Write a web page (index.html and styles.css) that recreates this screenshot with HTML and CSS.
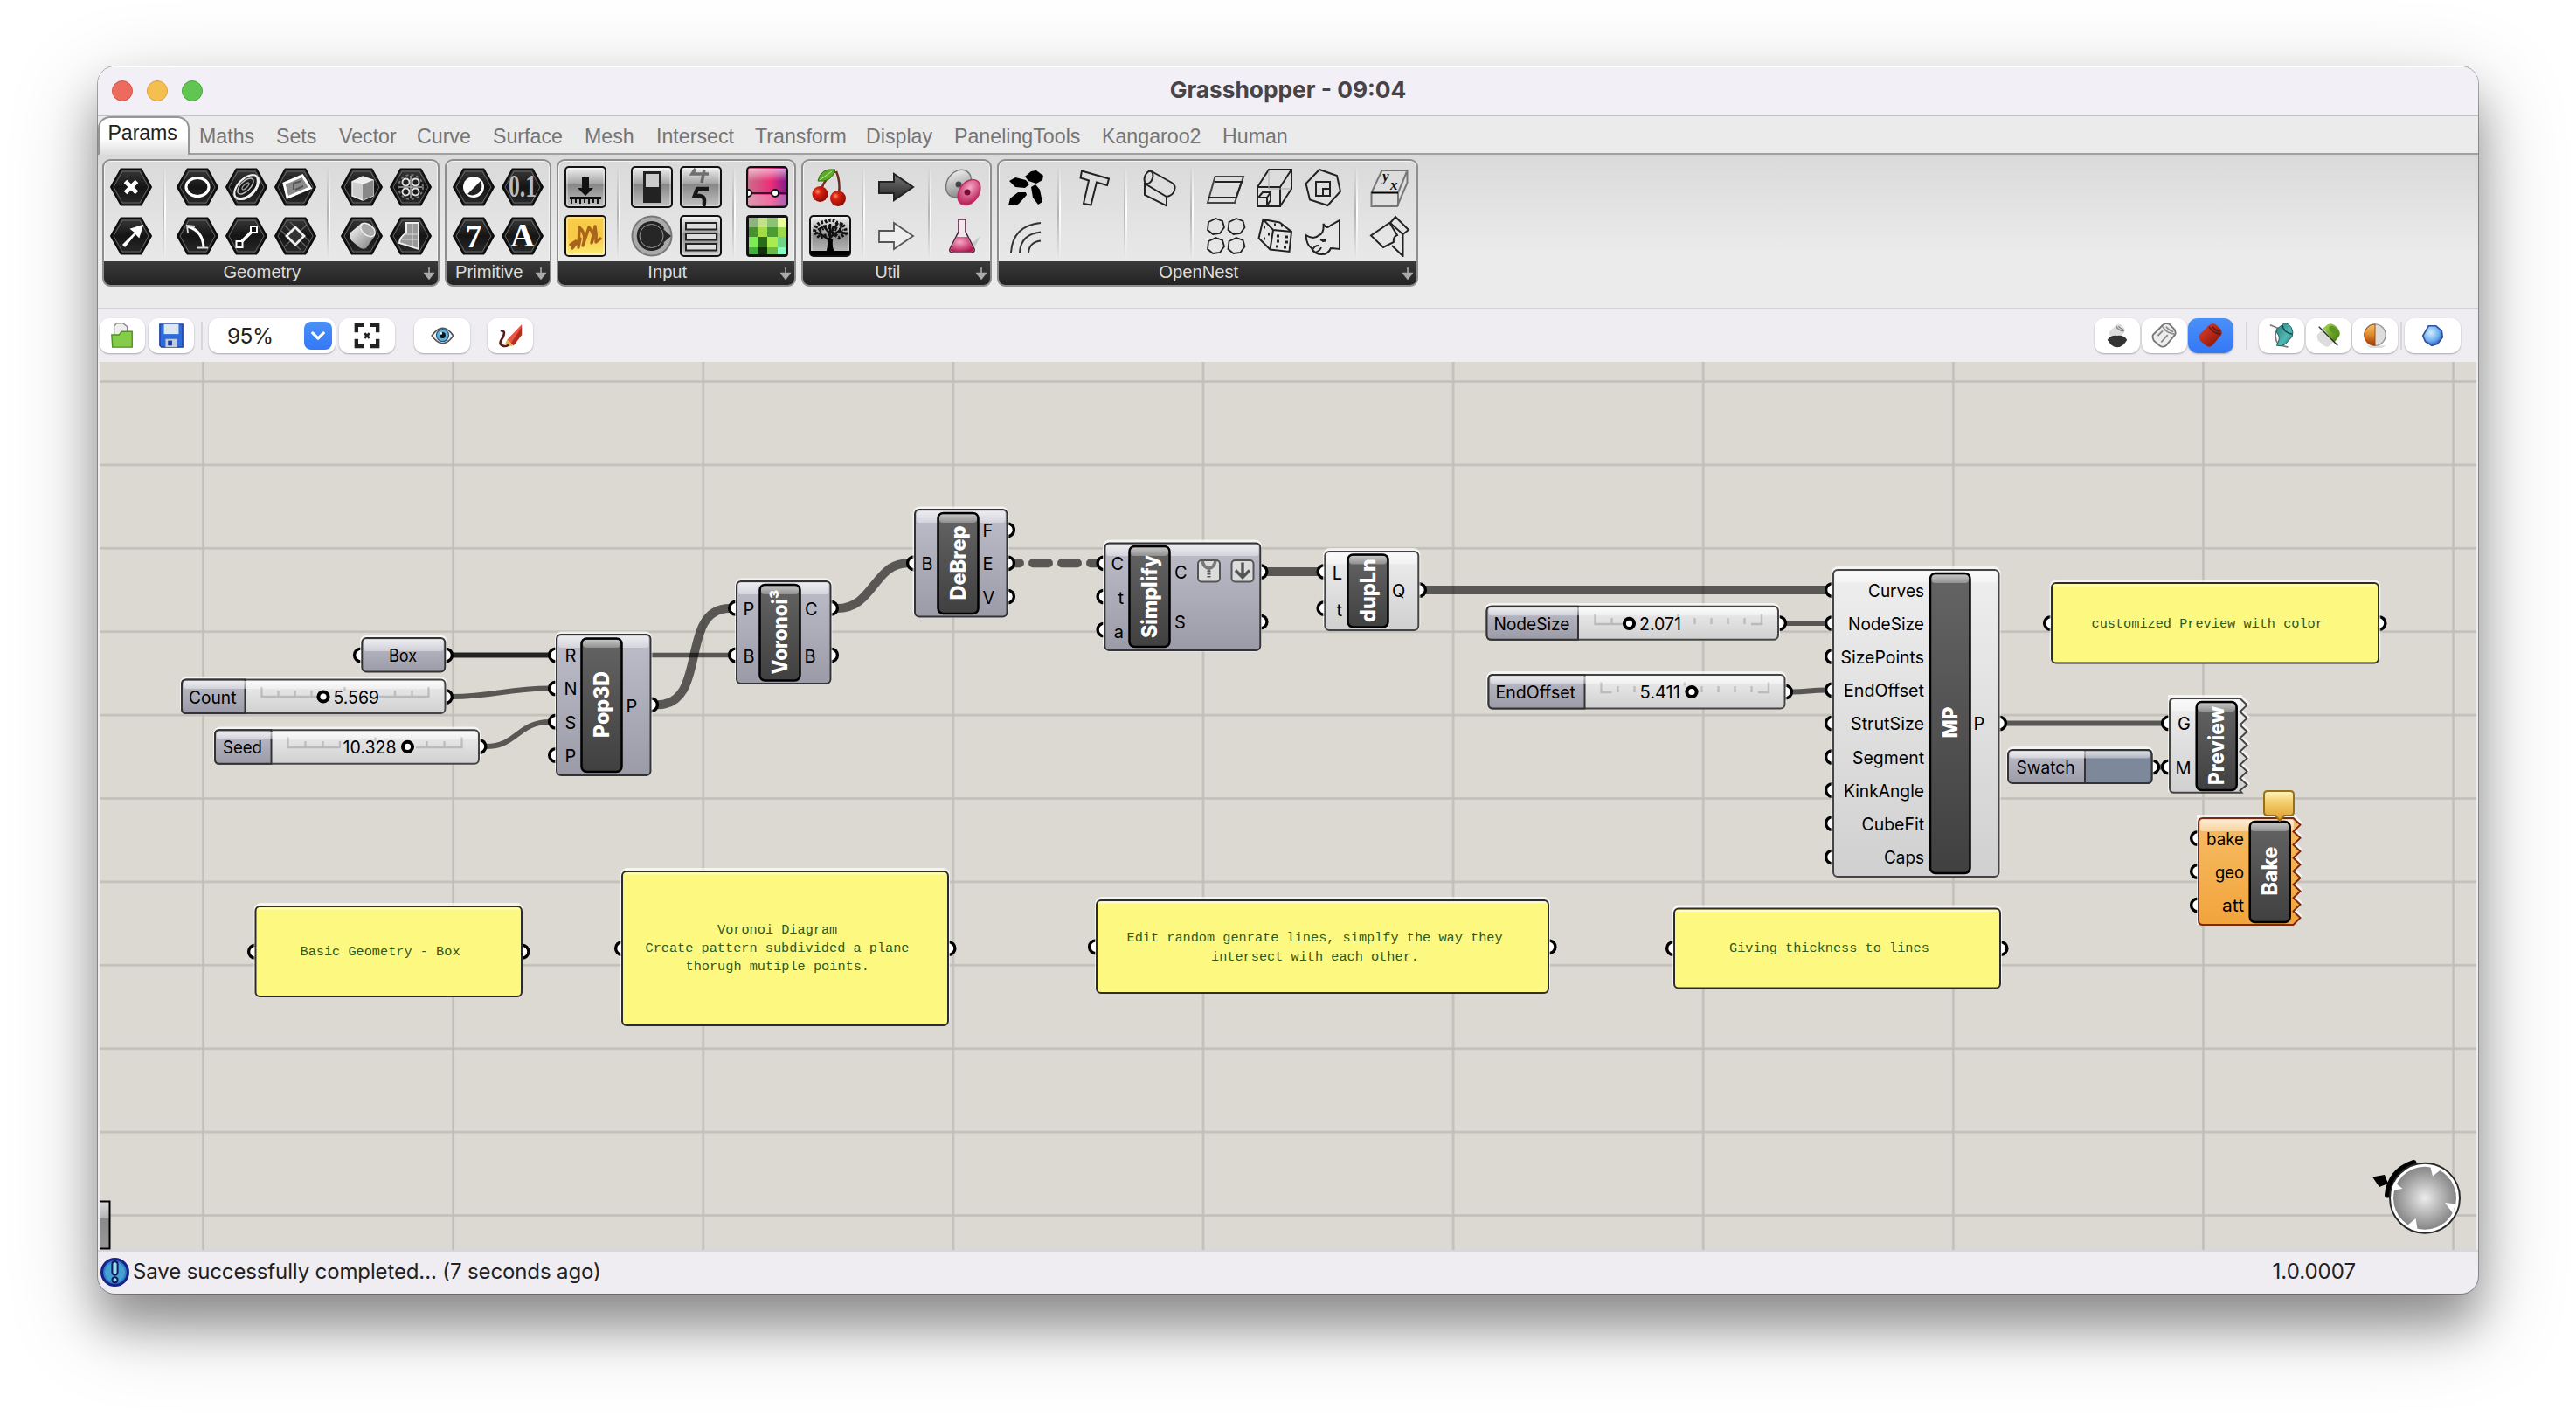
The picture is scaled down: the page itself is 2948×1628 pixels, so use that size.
FILE: index.html
```html
<!DOCTYPE html>
<html lang="en">
<head>
<meta charset="utf-8">
<title>Grasshopper - 09:04</title>
<link rel="stylesheet" href="styles.css">
</head>
<body>
<svg class="defs" width="0" height="0" aria-hidden="true">
  <defs>
    <linearGradient id="hexg" x1="0" y1="0" x2="0" y2="1"><stop offset="0" stop-color="#3a3a3a"/><stop offset=".5" stop-color="#141414"/><stop offset="1" stop-color="#2a2a2a"/></linearGradient>
    <linearGradient id="silver" x1="0" y1="0" x2="0" y2="1"><stop offset="0" stop-color="#f2f2f2"/><stop offset=".42" stop-color="#a4a4a4"/><stop offset=".43" stop-color="#858585"/><stop offset="1" stop-color="#c4c4c4"/></linearGradient>
    <linearGradient id="amber" x1="0" y1="0" x2="0" y2="1"><stop offset="0" stop-color="#f6cd4c"/><stop offset=".5" stop-color="#f8c944"/><stop offset="1" stop-color="#fdec74"/></linearGradient>
    <linearGradient id="pink" x1="0" y1="0" x2="1" y2="0"><stop offset="0" stop-color="#c8708c"/><stop offset=".6" stop-color="#ee2c78"/><stop offset="1" stop-color="#7c1c90"/></linearGradient>
    <linearGradient id="fade" x1="0" y1="0" x2="0" y2="1"><stop offset="0" stop-color="#fff" stop-opacity=".6"/><stop offset="1" stop-color="#fff" stop-opacity="0"/></linearGradient>
    <linearGradient id="steel" x1="0" y1="0" x2="1" y2="1"><stop offset="0" stop-color="#fff"/><stop offset="1" stop-color="#777"/></linearGradient>
    <linearGradient id="darkarrow" x1="0" y1="0" x2="0" y2="1"><stop offset="0" stop-color="#777"/><stop offset="1" stop-color="#222"/></linearGradient>
    <radialGradient id="cherry" cx=".35" cy=".35" r=".7"><stop offset="0" stop-color="#ff8a70"/><stop offset=".3" stop-color="#d8220f"/><stop offset="1" stop-color="#8c0b05"/></radialGradient>
    <radialGradient id="magenta" cx=".4" cy=".35" r=".7"><stop offset="0" stop-color="#f7a8c6"/><stop offset="1" stop-color="#b3174f"/></radialGradient>
    <linearGradient id="redcyl" x1="0" y1="0" x2="1" y2="1"><stop offset="0" stop-color="#e8442e"/><stop offset="1" stop-color="#7e0e06"/></linearGradient>
    <linearGradient id="tealcyl" x1="0" y1="0" x2="1" y2="1"><stop offset="0" stop-color="#2a8080"/><stop offset=".6" stop-color="#54b8b4"/><stop offset="1" stop-color="#1e6464"/></linearGradient>
    <linearGradient id="greencyl" x1="0" y1="0" x2="1" y2="1"><stop offset="0" stop-color="#a6dc52"/><stop offset="1" stop-color="#3c7408"/></linearGradient>
    <radialGradient id="bluegem" cx=".4" cy=".35" r=".7"><stop offset="0" stop-color="#d4ecff"/><stop offset=".6" stop-color="#6cb0f0"/><stop offset="1" stop-color="#2c50b0"/></radialGradient>
    <linearGradient id="orangeball" x1="0" y1="0" x2="0" y2="1"><stop offset="0" stop-color="#f4c26a"/><stop offset=".5" stop-color="#e08a28"/><stop offset="1" stop-color="#a03404"/></linearGradient>
    <symbol id="hex" viewBox="0 0 48 48"><path d="M1 24 12.5 3.500h23L47 24 35.500 44.500h-23z" fill="url(#hexg)" stroke="#0c0c0c" stroke-width="2"/><path d="M4 24 14 6h20l10 18-10 18H14z" fill="none" stroke="#666" stroke-width="1"/></symbol>
    <symbol id="plate" viewBox="0 0 48 48"><rect x="1" y="1" width="46" height="46" rx="4" fill="url(#silver)" stroke="#111" stroke-width="2"/><rect x="3" y="3" width="42" height="42" rx="2" fill="none" stroke="#fff" stroke-opacity=".6"/></symbol>
    <symbol id="more" viewBox="0 0 14 16"><path d="M7 1v13M1 7.500h12M3 9l4 5 4-5z" stroke="#aaa" stroke-width="1.600" fill="#aaa"/></symbol>
    <symbol id="tube" viewBox="0 0 32 32"><path d="M2 15 14 3Q18 0 22 2L28 8Q31 13 28 16L18 28Q14 31 10 28L3 22Q1 18 2 15z"/><path d="M14 5Q18 13 28 14M18 5q4 5 9 6" fill="none" stroke="#0006" stroke-width="2"/></symbol>
  </defs>
</svg>

<main class="window">
  <header class="titlebar">
    <div class="lights"><i class="red"></i><i class="yellow"></i><i class="green"></i></div>
    <h1>Grasshopper - 09:04</h1>
  </header>

  <nav class="tabs">
    <a class="active">Params</a><a>Maths</a><a>Sets</a><a>Vector</a><a>Curve</a><a>Surface</a><a>Mesh</a><a>Intersect</a><a>Transform</a><a>Display</a><a>PanelingTools</a><a>Kangaroo2</a><a>Human</a>
  </nav>

  <section class="ribbon">
    <div class="group">
      <div class="tools">
        <div class="bank">
          <svg class="icon" viewBox="0 0 48 48"><use href="#hex"/><path d="M17.500 17.500l13 13m0-13l-13 13" stroke="#fff" stroke-width="5"/></svg>
          <svg class="icon" viewBox="0 0 48 48"><use href="#hex"/><path d="M15 34 29 20l-5-4 13-4-4 13-4-4L17 36z" fill="#fff" stroke="#fff" stroke-width="1.500"/></svg>
        </div>
        <span class="sep"></span>
        <div class="bank">
          <svg class="icon" viewBox="0 0 48 48"><use href="#hex"/><ellipse cx="24" cy="24" rx="13" ry="10.500" fill="none" stroke="#fff" stroke-width="3.200"/></svg>
          <svg class="icon" viewBox="0 0 48 48"><use href="#hex"/><path d="M13 13Q30 18 31 37" fill="none" stroke="#fff" stroke-width="3"/><path d="M13 20l-1-8 9 1M23 37.500h13" fill="none" stroke="#ddd" stroke-width="1.800"/></svg>
          <svg class="icon" viewBox="0 0 48 48"><use href="#hex"/><g transform="rotate(-45 24 24)" fill="none" stroke="#eee"><ellipse cx="24" cy="24" rx="17" ry="9.500" stroke-width="2.200"/><path d="M7 25Q12 34 24 34t17-9" stroke-width="3"/><ellipse cx="24" cy="22.500" rx="11.500" ry="5.500" stroke-width="1.500" stroke="#bbb"/><ellipse cx="24" cy="22.500" rx="5" ry="2" stroke-width="1.500" stroke="#999"/></g></svg>
          <svg class="icon" viewBox="0 0 48 48"><use href="#hex"/><path d="M16 33 32 17" stroke="#fff" stroke-width="3.600"/><rect x="12.500" y="30" width="7" height="7" fill="#111" stroke="#fff" stroke-width="2"/><rect x="29" y="13" width="7" height="7" fill="#111" stroke="#fff" stroke-width="2"/></svg>
          <svg class="icon" viewBox="0 0 48 48"><use href="#hex"/><path d="M11 20 32 11 41 25 15 36z" fill="#8a8a8a" stroke="#fff" stroke-width="3"/><path d="M22 27V20l9-3M24 27l9-4" fill="none" stroke="#555" stroke-width="2"/></svg>
          <svg class="icon" viewBox="0 0 48 48"><use href="#hex"/><path d="M12 12 37 37M12 36 37 11M18 8l22 22M8 18l22 22" stroke="#666" stroke-width="1.200"/><path d="M24 14 34 24 24 34 14 24z" fill="#333" stroke="#eee" stroke-width="2.800"/></svg>
        </div>
        <span class="sep"></span>
        <div class="bank">
          <svg class="icon" viewBox="0 0 48 48"><use href="#hex"/><path d="M13 18 25 12 37 16V34L25 39 13 34z" fill="#ccc" stroke="#eee" stroke-width="1.500"/><path d="M25 21 37 16V34L25 39z" fill="#888"/><path d="M13 18 25 12 37 16 25 21z" fill="#eee"/></svg>
          <svg class="icon" viewBox="0 0 48 48"><use href="#hex"/><path d="M11 20 24 9Q32 9 37 15q3 4 2 9L29 38q-4 2-8-1l-9-8q-3-5-1-9z" fill="url(#steel)"/><ellipse cx="31" cy="17" rx="9.500" ry="6" transform="rotate(40 31 17)" fill="#aaa" stroke="#eee" stroke-width="1.500"/></svg>
          <svg class="icon" viewBox="0 0 48 48"><use href="#hex"/><g fill="none" stroke="#ddd" stroke-width="2"><circle cx="18.500" cy="18.500" r="4"/><circle cx="29.500" cy="18.500" r="4"/><circle cx="18.500" cy="29.500" r="4"/><circle cx="29.500" cy="29.500" r="4"/><path d="M24 11v26M11 24h26" stroke="#aaa" stroke-width="1.500"/><circle cx="24" cy="24" r="14" stroke="#777" stroke-width="2" stroke-dasharray="3 3"/></g></svg>
          <svg class="icon" viewBox="0 0 48 48"><use href="#hex"/><path d="M19 9h14v30L11 32q0-6 8-12z" fill="#999" stroke="#eee" stroke-width="2"/><path d="M26 10v27M17 22h16M14 28h19" stroke="#ddd" stroke-width="1"/></svg>
        </div>
      </div>
      <footer><span>Geometry</span><svg class="more"><use href="#more"/></svg></footer>
    </div>

    <div class="group">
      <div class="tools">
        <div class="bank">
          <svg class="icon" viewBox="0 0 48 48"><use href="#hex"/><circle cx="24" cy="24" r="12" fill="#fff"/><path d="M32 17a11 11 0 0 1-15 15z" fill="#222"/></svg>
          <svg class="icon" viewBox="0 0 48 48"><use href="#hex"/><text x="24" y="37" class="glyph" font-size="38">7</text></svg>
          <svg class="icon" viewBox="0 0 48 48"><use href="#hex"/><text x="24" y="35" class="glyph dim" font-size="35" textLength="32" lengthAdjust="spacingAndGlyphs">0.1</text></svg>
          <svg class="icon" viewBox="0 0 48 48"><use href="#hex"/><text x="24" y="36" class="glyph" font-size="38">A</text></svg>
        </div>
      </div>
      <footer><span>Primitive</span><svg class="more"><use href="#more"/></svg></footer>
    </div>

    <div class="group">
      <div class="tools">
        <div class="bank">
          <svg class="icon" viewBox="0 0 48 48"><use href="#plate"/><path d="M20 13h8v12h5l-9 9-9-9h5zM6 35h36v3H6z" fill="#111"/><path d="M8 38v5m5-5v4m5-4v5m5-5v4m5-4v5m5-5v4m5-4v5" stroke="#111" stroke-width="2"/></svg>
          <svg class="icon" viewBox="0 0 48 48"><rect x="1" y="1" width="46" height="46" rx="4" fill="url(#amber)" stroke="#111" stroke-width="2"/><rect x="3" y="3" width="42" height="42" fill="none" stroke="#fff" stroke-opacity=".7"/><path d="M7 34l6-4-4 8 9-11-2 10L17 14q9 8 4 21l7-21q8 8 3 18l4-19q2 9 1 18l5-4" fill="none" stroke="#a8641c" stroke-width="3.400" stroke-linejoin="round" stroke-linecap="round"/></svg>
        </div>
        <span class="sep"></span>
        <div class="bank">
          <svg class="icon" viewBox="0 0 48 48"><use href="#plate"/><rect x="14" y="6" width="21" height="36" fill="#222"/><rect x="17" y="9" width="15" height="15" fill="#ccc"/></svg>
          <svg class="icon" viewBox="0 0 48 48"><circle cx="24" cy="24" r="22.500" fill="#aaa" stroke="#777" stroke-width="2"/><path d="M46 24 37 32A15.500 15.500 0 1 1 37 16z" fill="#262626"/><path d="M37 32A15.500 15.500 0 1 1 37 16" fill="none" stroke="#222" stroke-width="3"/><circle cx="23.500" cy="24" r="13.500" fill="none" stroke="#999" stroke-width="1"/></svg>
          <svg class="icon" viewBox="0 0 48 48"><use href="#plate"/><path d="M18 3 14 9h19M28 4l-3 15" fill="none" stroke="#444" stroke-opacity=".7" stroke-width="3.600"/><path d="M33 26H20l-3 8q11-1 11 5t-1 7" fill="none" stroke="#161616" stroke-width="4.500"/></svg>
          <svg class="icon" viewBox="0 0 48 48"><use href="#plate"/><g fill="#ddd" stroke="#222" stroke-width="2"><rect x="7" y="9" width="35" height="7.500"/><rect x="7" y="21" width="35" height="7.500"/><rect x="7" y="33" width="35" height="7.500"/></g></svg>
        </div>
        <span class="sep"></span>
        <div class="bank">
          <svg class="icon" viewBox="0 0 48 48"><rect x="1" y="1" width="46" height="46" rx="4" fill="url(#pink)" stroke="#111" stroke-width="2"/><path d="M3 3h42v14H3z" fill="url(#fade)"/><path d="M2 33h44v12H2z" fill="#fff" opacity=".3"/><path d="M2 31h44" stroke="#401030" stroke-width="2"/><circle cx="33" cy="31" r="4" fill="#fff" stroke="#111" stroke-width="2"/><path d="M2 27a4 4 0 0 1 0 8" fill="#fff" stroke="#111" stroke-width="2"/></svg>
          <svg class="icon" viewBox="0 0 48 48"><rect width="48" height="48" rx="4" fill="#111"/><path d="M3 3h10v11H3z" fill="#8cb47c"/><path d="M13 3h11v11H13z" fill="#c4e088"/><path d="M24 3h12v11H24z" fill="#8cc474"/><path d="M36 3h9v11h-9z" fill="#e8fca0"/><path d="M3 14h10v11H3z" fill="#48902c"/><path d="M13 14h11v11H13z" fill="#a4dc44"/><path d="M24 14h12v11H24z" fill="#4c9c34"/><path d="M36 14h9v11h-9z" fill="#9cd84c"/><path d="M3 25h10v12H3z" fill="#7cec54"/><path d="M13 25h11v12H13z" fill="#2a6c1c"/><path d="M24 25h12v12H24z" fill="#a8ec50"/><path d="M36 25h9v12h-9z" fill="#6cd484"/><path d="M3 37h10v8H3z" fill="#44ac3c"/><path d="M13 37h11v8H13z" fill="#14300c"/><path d="M24 37h12v8H24z" fill="#6cb848"/><path d="M36 37h9v8h-9z" fill="#84fcc4"/></svg>
        </div>
      </div>
      <footer><span>Input</span><svg class="more"><use href="#more"/></svg></footer>
    </div>

    <div class="group">
      <div class="tools">
        <div class="bank">
          <svg class="icon" viewBox="0 0 48 48"><path d="M30 6Q18 14 14 26M31 6q5 12 3 26" fill="none" stroke="#6e2a1c" stroke-width="2.500"/><path d="M10 17Q13 2 30 4 26 19 10 17z" fill="#5cab28" stroke="#2f6a10"/><path d="M12 16 26 6" stroke="#c4e890" stroke-width="1"/><circle cx="12.500" cy="32" r="9" fill="url(#cherry)"/><circle cx="33" cy="37" r="9" fill="url(#cherry)"/></svg>
          <svg class="icon" viewBox="0 0 48 48"><use href="#plate"/><path d="M2 41h44v5H2z" fill="#000"/><path d="M21 42q2-8 1-14l-10-7m10 7 5-5 9-6M24 27V10m0 12-8-10m9 8 8-11M14 22l-7-2m6 2 0-8m21 5 7 2m-6-3 3-9" fill="none" stroke="#111" stroke-width="2.500"/><path d="M21 28h6q-1 9 2 14h-9q2-8 1-14z" fill="#000"/><path d="M6 19Q8 8 18 8q8-5 14 1 10 1 10 12l-8 5-6-5-8 2-8 3z" fill="none" stroke="#111" stroke-width="4" stroke-dasharray="2.500 2"/><path d="M11 18Q18 12 25 14t13 5" fill="none" stroke="#111" stroke-width="5" stroke-dasharray="2 2"/></svg>
        </div>
        <span class="sep"></span>
        <div class="bank">
          <svg class="icon" viewBox="0 0 48 48"><path d="M4 18h17V9l22 15-22 15v-8H4z" fill="url(#darkarrow)" stroke="#222" stroke-width="2"/></svg>
          <svg class="icon" viewBox="0 0 48 48"><path d="M4 18h17V9l22 15-22 15v-8H4z" fill="#eee" stroke="#555" stroke-width="1.800"/></svg>
        </div>
        <span class="sep"></span>
        <div class="bank">
          <svg class="icon" viewBox="0 0 48 48"><ellipse cx="19" cy="20" rx="13" ry="17" transform="rotate(35 19 20)" fill="url(#steel)" stroke="#777" stroke-width="1.500"/><circle cx="19" cy="21" r="3.500" fill="#444"/><ellipse cx="31" cy="30" rx="11" ry="16" transform="rotate(35 31 30)" fill="url(#magenta)" stroke="#c22c64" stroke-width="1.500"/><circle cx="29" cy="30" r="3.500" fill="#7a0c34"/></svg>
          <svg class="icon" viewBox="0 0 48 48"><path d="M30 36 44 24l-7 14z" fill="#0002"/><path d="M19 5h8v14l10 20q1 4-4 4H13q-5 0-4-4l10-20z" fill="#f2e8ee" stroke="#5a2040" stroke-width="1.600"/><path d="M17 25h12l7 14q1 3-3 3H13q-4 0-3-3z" fill="url(#magenta)"/></svg>
        </div>
      </div>
      <footer><span>Util</span><svg class="more"><use href="#more"/></svg></footer>
    </div>

    <div class="group">
      <div class="tools line">
        <div class="bank">
          <svg class="icon" viewBox="0 0 48 48"><g fill="#000" stroke="none"><path d="M5 17l7-4 12 3 4 5-5 4-11-1z"/><path d="M23 12l7-6 6-1 8 6-1 5-7 4-9-3z"/><path d="M4 45l2-8 9-7h9l1 3-9 10-3 2z"/><path d="M30 24l5-3 5 6 3 14-5 3-6-8z"/></g></svg>
          <svg class="icon" viewBox="0 0 48 48"><path d="M7 43Q9 12 41 9M17 43Q18 22 41 19.500M27 43Q28 31 41 29.500" stroke="#333"/></svg>
        </div>
        <span class="sep"></span>
        <div class="bank"><svg class="icon" viewBox="0 0 48 48"><path d="M12 5.500 43 14.500 41 22 29 18.500 22.500 44.500 14 43 20 16.500 10.500 13.500z"/></svg></div>
        <span class="sep"></span>
        <div class="bank"><svg class="icon" viewBox="0 0 48 48"><ellipse cx="12.500" cy="13" rx="4.500" ry="7.500" transform="rotate(20 12.500 13)"/><path d="M15 5.500 39 19Q44 22 42 28 40 34 33 35L8 20v13l25 12.500V35"/></svg></div>
        <span class="sep"></span>
        <div class="bank">
          <svg class="icon" viewBox="0 0 48 48"><path d="M12.500 12H45L35 42H4l8.500-30" stroke="#444"/><path d="M4 36h32.500L43 18H12" stroke="#222"/></svg>
          <svg class="icon" viewBox="0 0 48 48"><path d="M13.500 4l7.500 3 2 7-5 7-8 1-6-5 1-9zM37 4l7.500 3 2 7-5 7-8 1-6-5 1-9zM13.500 26l7.500 3 2 7-5 7-8 1-6-5 1-9zM37 26l7.500 3 2 7-5 7-8 1-6-5 1-9z" stroke-width="1.800"/></svg>
          <svg class="icon" viewBox="0 0 48 48"><path d="M5 24h26v22H5zM5 24 18 4h26v22L31 46M31 24 44 4"/><path d="M18 4v22M18 26h26" stroke="#aaa" stroke-width="1"/><path d="M6 36h10v9M6 36l5-6h9v9l-4 6M16 36l4-6"/></svg>
          <svg class="icon" viewBox="0 0 48 48"><path d="M11.500 5 30.500 8.500 44 19 41.500 42 19.500 39.500 6.500 26.500zM11.500 5 23 17l21 2M23 17l-3.500 22.500"/><path d="M27 24h3m7 1h3m-13 5h3m7 1h3m-14 5h3m6 1h3M12 14h2m-2 13h2m3-5h2M24 11h2m6 1h2" stroke-width="3"/></svg>
          <svg class="icon" viewBox="0 0 48 48"><path d="M20 4 40 11 44 29 29.500 45 9 38.500 4.500 20z"/><path d="M16 18h16v16H16zM32 26h-8v8"/></svg>
          <svg class="icon" viewBox="0 0 48 48"><path d="M4.500 23q9 6 15 0 6-2 5-13 4 7 8 2L43 6v33l-10-1q-3 7-10 7-9 0-12-7-6-4-6.500-15zM12 40q2-5 7-5m-5 8q6-1 8-6M21 28l4 2"/><path d="M23 29h4" stroke-width="3.500"/></svg>
        </div>
        <span class="sep"></span>
        <div class="bank">
          <svg class="icon" viewBox="0 0 48 48"><path d="M15.500 5h29v14L33 46H3.500V30.500zM44.500 5 34 30.500V46" stroke="#777"/><path d="M3.500 30.500H34" stroke="#000"/><text x="16" y="17" class="axis">y</text><text x="25" y="27" class="axis">x</text></svg>
          <svg class="icon" viewBox="0 0 48 48"><path d="M24 9 3 23.500 17 37l12-6q-1-6 4-8l-8-13zM31 2 46 17l-6.500 5L25 9zM39.500 22v25L27 35"/></svg>
        </div>
      </div>
      <footer><span>OpenNest</span><svg class="more"><use href="#more"/></svg></footer>
    </div>
  </section>

  <section class="toolbar">
    <div class="left">
      <button class="btn w52"><svg class="tb" viewBox="0 0 32 32"><path d="M6 16V4l3-3h8l5 4v9z" fill="#eee" stroke="#888" stroke-width="1.400"/><path d="M3 15h9l3-4h13v19H4z" fill="#86cc48" stroke="#4c9424" stroke-width="1.500"/></svg></button>
      <button class="btn w52 save"><svg class="tb" viewBox="0 0 32 32"><path d="M2 2h28v28H4l-2-2z" fill="#2e6cdc" stroke="#1c3c98" stroke-width="1.500"/><path d="M7 2h18v12H7z" fill="#dde8f0"/><path d="M9 20h14v10H9z" fill="#c4ccd8"/><path d="M12 22h5v6h-5z" fill="#1c3c98"/></svg></button>
      <span class="rule"></span>
      <div class="zoom"><span>95%</span><i><svg viewBox="0 0 16 16"><path d="M3 5.500l5 5 5-5" fill="none" stroke="#fff" stroke-width="2.600" stroke-linecap="round" stroke-linejoin="round"/></svg></i></div>
      <button class="btn w64 fit"><svg class="tb" viewBox="0 0 32 32"><path d="M3 12V3h9M20 3h9v9M29 20v9h-9M12 29H3v-9" fill="none" stroke="#222" stroke-width="4.600"/><path d="M13 13l6 6m0-6l-6 6" stroke="#222" stroke-width="3"/></svg></button>
      <button class="btn w64 eye"><svg class="tb" viewBox="0 0 32 32"><path d="M2 16Q9 6 16 6t14 10Q23 26 16 26T2 16z" fill="#f4f4f4" stroke="#555" stroke-width="2"/><circle cx="16" cy="15.500" r="8" fill="#5cb4dc" stroke="#2c5c80" stroke-width="1.500"/><circle cx="16" cy="15.500" r="4" fill="#0c1420"/><circle cx="14" cy="13" r="1.500" fill="#fff"/></svg></button>
      <button class="btn w52 paint"><svg class="tb" viewBox="0 0 32 32"><path d="M30 2v13L20 28 12 21z" fill="#ec5444"/><path d="M30 5v10L20 28l-3-3z" fill="#b82c20"/><path d="M12 21l8 7-6 1-4-4z" fill="#e8b048"/><path d="M4 10q7-1 3 8-6 8-1 10 5 2 8-1" fill="none" stroke="#5a1c14" stroke-width="2.800"/></svg></button>
    </div>
    <div class="right">
      <button class="btn w52"><svg class="tb" viewBox="0 0 32 32"><use href="#tube" x="5" y="0" width="22" height="24" fill="#ddd"/><path d="M4 21q4-6 12-5 8-1 12 5-5 9-12 9T4 21z" fill="#333"/></svg></button>
      <button class="btn w52"><svg class="tb" viewBox="0 0 32 32"><use href="#tube" fill="#eee" stroke="#777" stroke-width="2"/><path d="M8 16l6-6M12 24l8-9" stroke="#888" stroke-width="2"/></svg></button>
      <button class="btn w52 on"><svg class="tb" viewBox="0 0 32 32"><use href="#tube" fill="url(#redcyl)"/></svg></button>
      <span class="rule"></span>
      <button class="btn w52"><svg class="tb" viewBox="0 0 32 32"><path d="M2 3l10 4q-7 8 0 20l12 3" fill="none" stroke="#777" stroke-width="1.800"/><path d="M10 8 19 1q5-1 9 5 3 6 1 11l-8 9q-5 4-11 2 5-9 2-13-3-3-2-7z" fill="url(#tealcyl)" stroke="#1c6060"/><path d="M17 3q1 9 12 11" fill="none" stroke="#104c4c" stroke-width="1.500"/></svg></button>
      <button class="btn w52"><svg class="tb" viewBox="0 0 32 32"><use href="#tube" fill="#ddd"/><path d="M9 7 15 2q6-2 12 5 5 7 0 12l-4 5z" fill="url(#greencyl)"/><path d="M4 5 27 28" stroke="#243424" stroke-width="1.600"/><ellipse cx="21.500" cy="9" rx="6" ry="3.500" transform="rotate(40 21.500 9)" fill="#5c9820"/></svg></button>
      <button class="btn w52"><svg class="tb" viewBox="0 0 32 32"><path d="M6 28h24l-6 3H10z" fill="#0002"/><circle cx="16" cy="15" r="13" fill="#ddd" stroke="#999" stroke-width="1.500"/><path d="M16 2a13 13 0 0 0 0 26z" fill="url(#orangeball)" stroke="#a04808"/></svg></button>
      <span class="rule tight"></span>
      <button class="btn w64"><svg class="tb" viewBox="0 0 32 32"><path d="M11 4h9l7 6 1 8-6 8-7 2-8-5-3-7z" fill="url(#bluegem)" stroke="#3450a0" stroke-width="1.800"/></svg></button>
    </div>
  </section>

  <section class="canvas">
    <svg class="graph" viewBox="114 414 2720 1016">
      <defs>
        <linearGradient id="nb" x1="0" y1="0" x2="0" y2="1"><stop offset="0" stop-color="#bebecb"/><stop offset="1" stop-color="#9b9ba8"/></linearGradient>
        <linearGradient id="wb" x1="0" y1="0" x2="0" y2="1"><stop offset="0" stop-color="#eee"/><stop offset="1" stop-color="#d0d0d0"/></linearGradient>
        <linearGradient id="db" x1="0" y1="0" x2="0" y2="1"><stop offset="0" stop-color="#646464"/><stop offset="1" stop-color="#404040"/></linearGradient>
        <linearGradient id="ob" x1="0" y1="0" x2="0" y2="1"><stop offset="0" stop-color="#f6bc64"/><stop offset="1" stop-color="#f2a43c"/></linearGradient>
        <linearGradient id="gl" x1="0" y1="0" x2="0" y2="1"><stop offset="0" stop-color="#fff" stop-opacity=".72"/><stop offset="1" stop-color="#fff" stop-opacity=".38"/></linearGradient>
        <linearGradient id="gd" x1="0" y1="0" x2="0" y2="1"><stop offset="0" stop-color="#fff" stop-opacity=".62"/><stop offset="1" stop-color="#fff" stop-opacity=".3"/></linearGradient>
        <linearGradient id="bal" x1="0" y1="0" x2="0" y2="1"><stop offset="0" stop-color="#fff4c0"/><stop offset=".35" stop-color="#f4d070"/><stop offset="1" stop-color="#e09c2c"/></linearGradient>
        <linearGradient id="stub" x1="0" y1="0" x2="0" y2="1"><stop offset="0" stop-color="#ddd"/><stop offset=".36" stop-color="#b4b4b4"/><stop offset=".37" stop-color="#8a8a8a"/><stop offset="1" stop-color="#989898"/></linearGradient>
        <radialGradient id="dial"><stop offset="0" stop-color="#ececec"/><stop offset="1" stop-color="#868686"/></radialGradient>
        <pattern id="grid" patternUnits="userSpaceOnUse" x="231" y="435" width="286.120" height="95.400"><path d="M1.500 0v96M0 1.500h287" stroke="#000" stroke-opacity=".12" stroke-width="2.500" fill="none"/></pattern>
        <circle id="g" r="7.400" fill="#fff" stroke="#000" stroke-width="3.400"/>
      </defs>
      <rect x="114" y="414" width="2720" height="1016" fill="url(#grid)"/>

      <g class="wires">
        <path d="M517 749.500H629" stroke-width="6"/><path d="M517 749.500H835" stroke-width="5.500"/>
        <path d="M517 797C565 797 580 787.500 629 787.500" stroke-width="6"/>
        <path d="M556 854C592 854 592 826 629 826" stroke-width="6"/>
        <path d="M752 806.300C812 806.300 776 696 835 696" stroke-width="10"/>
        <path d="M958 696C1000 696 1000 644.300 1039 644.300" stroke-width="10"/>
        <path d="M1160 644.300h7m15 0h18m15 0h18m15 0h9" stroke-width="10" stroke-linecap="round"/>
        <path d="M1450 654h58M1631 675h459" stroke-width="10"/>
        <path d="M2043 713h47" stroke-width="6"/><path d="M2051 791.500C2070 791.500 2070 789.500 2090 789.500" stroke-width="6"/>
        <path d="M2296 827.400h179M2470 877.500h6" stroke-width="6"/>
      </g>
      <g>
        <use href="#g" x="413" y="749.500"/><use href="#g" x="510" y="749.500"/><use href="#g" x="510" y="797"/><use href="#g" x="548.500" y="854"/>
        <use href="#g" x="636" y="749.500"/><use href="#g" x="636" y="787.500"/><use href="#g" x="636" y="825.700"/><use href="#g" x="636" y="864"/><use href="#g" x="745" y="806.300"/>
        <use href="#g" x="842" y="695.700"/><use href="#g" x="842" y="749.500"/><use href="#g" x="951" y="695.700"/><use href="#g" x="951" y="749.500"/>
        <use href="#g" x="1046" y="644.300"/><use href="#g" x="1153" y="606.300"/><use href="#g" x="1153" y="644.300"/><use href="#g" x="1153" y="682.500"/>
        <use href="#g" x="1263.500" y="644.300"/><use href="#g" x="1263.500" y="682.500"/><use href="#g" x="1263.500" y="720.500"/><use href="#g" x="1442.500" y="654"/><use href="#g" x="1442.500" y="711.500"/>
        <use href="#g" x="1515.500" y="654"/><use href="#g" x="1515.500" y="696"/><use href="#g" x="1624" y="675"/>
        <use href="#g" x="2036" y="713"/><use href="#g" x="2043" y="791.500"/>
        <use href="#g" x="2097" y="675"/><use href="#g" x="2097" y="713"/><use href="#g" x="2097" y="751"/><use href="#g" x="2097" y="789.300"/><use href="#g" x="2097" y="827.500"/><use href="#g" x="2097" y="866"/><use href="#g" x="2097" y="904"/><use href="#g" x="2097" y="942"/><use href="#g" x="2097" y="980.500"/><use href="#g" x="2288" y="827.500"/>
        <use href="#g" x="2463" y="877.500"/><use href="#g" x="2482" y="827.400"/><use href="#g" x="2482" y="877.500"/>
        <use href="#g" x="2515" y="959"/><use href="#g" x="2515" y="997"/><use href="#g" x="2515" y="1035.500"/>
        <use href="#g" x="2347" y="713"/><use href="#g" x="2722.500" y="713"/><use href="#g" x="292" y="1088.700"/><use href="#g" x="597.500" y="1088.700"/><use href="#g" x="712" y="1085"/><use href="#g" x="1085.500" y="1085"/><use href="#g" x="1254" y="1083.300"/><use href="#g" x="1772.500" y="1083.300"/><use href="#g" x="1915" y="1085"/><use href="#g" x="2289.500" y="1085"/>
      </g>

      <!-- halos -->
      <g class="halo">
        <rect x="414" y="728" width="95.500" height="39" rx="6"/><rect x="208" y="776" width="301.500" height="39" rx="6"/><rect x="246" y="833.500" width="302" height="39" rx="6"/><rect x="637" y="724.500" width="107.500" height="160" rx="6"/><rect x="843" y="663.500" width="107.500" height="117" rx="6"/><rect x="1046.500" y="581.500" width="106" height="123" rx="6"/><rect x="1264" y="619.500" width="178" height="124" rx="6"/><rect x="1516" y="629" width="107.500" height="91" rx="6"/><rect x="2097.500" y="650" width="190" height="352" rx="6"/><rect x="1701" y="692" width="334" height="39" rx="6"/><rect x="1703" y="770" width="339.500" height="39" rx="6"/><rect x="2298" y="856" width="164.500" height="39" rx="6"/><rect x="2347.700" y="665" width="374.500" height="92" rx="6"/><rect x="292.500" y="1035" width="304.500" height="103" rx="6"/><rect x="712" y="995" width="373" height="176" rx="6"/><rect x="1255" y="1028" width="517" height="106" rx="6"/><rect x="1915.500" y="1037.500" width="373.500" height="91.500" rx="6"/>
        <path d="M2564 797l8 8-8 7.600 8 7.600-8 7.600 8 7.600-8 7.600 8 7.600-8 7.600 8 7.600-8 7.600 8 7.600-8 7.600 8 7.600-8 7.600h-81V797zM2625 934l8 8-8 7.600 8 7.600-8 7.600 8 7.600-8 7.600 8 7.600-8 7.600 8 7.600-8 7.600 8 7.600-8 7.600 8 7.600-8 7.600 8 7.600-8 7.600h-109V934z"/>
      </g>

      <!-- Box parameter -->
      <rect class="node" x="414.300" y="730" width="95" height="38.500" rx="5"/><rect class="gloss" x="416" y="731.500" width="91.500" height="13.500" rx="3"/>
      <text class="t" x="445" y="757" textLength="32" lengthAdjust="spacingAndGlyphs">Box</text>

      <!-- Count slider -->
      <rect class="lite" x="208" y="777.500" width="301.500" height="38.500" rx="5"/><path class="cap" d="M280.500 777.500H213q-5 0-5 5V811q0 5 5 5h67.500z"/><rect class="gloss" x="210" y="779" width="297.500" height="9" rx="3"/>
      <text class="t" x="216" y="804.500" textLength="54.500" lengthAdjust="spacingAndGlyphs">Count</text>
      <path class="tick" d="M299.400 786v11h65M318.500 790v7M337.600 790v7M356.500 790v7M394.500 786v4M434 797h56.500v-11M452 790v7M471.500 790v7"/>
      <circle class="knob" cx="370" cy="797" r="5.600"/><text class="t" x="381.500" y="804.500" textLength="52.500" lengthAdjust="spacingAndGlyphs">5.569</text>

      <!-- Seed slider -->
      <rect class="lite" x="246" y="835.300" width="302" height="38.500" rx="5"/><path class="cap" d="M310.500 835.300H251q-5 0-5 5v28.500q0 5 5 5h59.500z"/><rect class="gloss" x="248" y="837" width="298" height="9" rx="3"/>
      <text class="t" x="255" y="861.500" textLength="45" lengthAdjust="spacingAndGlyphs">Seed</text>
      <path class="tick" d="M329.500 843.500v11.500h60M349.500 848v7M369.500 848v7M389 848v7M429.500 843.500v4M476 855h52.500v-11.500M488.500 848v7M508.500 848v7"/>
      <circle class="knob" cx="466.500" cy="854.300" r="5.600"/><text class="t" x="392.500" y="861.500" textLength="61" lengthAdjust="spacingAndGlyphs">10.328</text>

      <!-- Pop3D -->
      <rect class="node" x="637" y="726" width="107.500" height="161" rx="5"/><rect class="gloss" x="639" y="727.500" width="103.500" height="13.500" rx="3"/>
      <rect class="dark" x="665.500" y="730.500" width="46" height="152.500" rx="6"/><rect class="shine" x="667" y="732" width="43" height="9" rx="4"/>
      <text class="t" x="646.500" y="756.700">R</text><text class="t" x="645.500" y="794.700">N</text><text class="t" x="646.500" y="833.500">S</text><text class="t" x="646.500" y="871.500">P</text><text class="t" x="716.500" y="814.700">P</text>
      <text class="v" transform="translate(696.600 844) rotate(-90)" textLength="76" lengthAdjust="spacingAndGlyphs">Pop3D</text>

      <!-- Voronoi -->
      <rect class="node" x="843" y="665" width="107.500" height="117" rx="5"/><rect class="gloss" x="845" y="666.500" width="103.500" height="13.500" rx="3"/>
      <rect class="dark" x="869.500" y="669" width="46" height="109.500" rx="6"/><rect class="shine" x="871" y="670.500" width="43" height="9.500" rx="4"/>
      <text class="t" x="850.500" y="704">P</text><text class="t" x="850.500" y="757.700">B</text><text class="t" x="921" y="704">C</text><text class="t" x="920.500" y="757.700">B</text>
      <text class="v" transform="translate(901.300 771.500) rotate(-90)" textLength="97" lengthAdjust="spacingAndGlyphs">Voronoi³</text>

      <!-- DeBrep -->
      <rect class="node" x="1047" y="583" width="105.500" height="122.500" rx="5"/><rect class="gloss" x="1049" y="584.500" width="101.500" height="13.500" rx="3"/>
      <rect class="dark" x="1073.500" y="587" width="46" height="115" rx="6"/><rect class="shine" x="1075" y="588.500" width="43" height="9.500" rx="4"/>
      <text class="t" x="1054.500" y="651.700">B</text><text class="t" x="1124.500" y="613.700">F</text><text class="t" x="1124.500" y="651.700">E</text><text class="t" x="1124.500" y="690.500">V</text>
      <text class="v" transform="translate(1104.700 686.500) rotate(-90)" textLength="85" lengthAdjust="spacingAndGlyphs">DeBrep</text>

      <!-- Simplify -->
      <rect class="node" x="1264.300" y="621.500" width="178" height="122.500" rx="5"/><rect class="gloss" x="1266" y="623" width="174.500" height="13" rx="3"/>
      <rect class="dark" x="1292.500" y="625" width="46" height="115" rx="6"/><rect class="shine" x="1294" y="626.500" width="43" height="9.500" rx="4"/>
      <text class="t" text-anchor="end" x="1286" y="651.700">C</text><text class="t" text-anchor="end" x="1286" y="691">t</text><text class="t" text-anchor="end" x="1286" y="729.500">a</text><text class="t" x="1344" y="661.700">C</text><text class="t" x="1344" y="719">S</text>
      <text class="v" transform="translate(1324.300 730) rotate(-90)" textLength="95" lengthAdjust="spacingAndGlyphs">Simplify</text>
      <rect class="badge" x="1371" y="641" width="25" height="24.500" rx="4"/><rect class="badge" x="1409.500" y="641" width="25" height="24.500" rx="4"/>
      <path d="M1376 642q2 8 7.500 8t7.500-8M1383.500 649v4" fill="none" stroke="#777" stroke-width="3.500"/><path d="M1383.500 653v9" stroke="#555" stroke-width="4" stroke-dasharray="1.500 1.500"/>
      <path d="M1422 643.500v17M1414 652.500l8 8 8-8" fill="none" stroke="#555" stroke-width="3.400"/>

      <!-- dupLn -->
      <rect class="lite" x="1516.300" y="631" width="107" height="90" rx="5"/><rect class="gloss" x="1518" y="632.500" width="103.500" height="13" rx="3"/>
      <rect class="dark" x="1542.500" y="634.500" width="46" height="83" rx="6"/><rect class="shine" x="1544" y="636" width="43" height="9.500" rx="4"/>
      <text class="t" text-anchor="end" x="1536" y="663">L</text><text class="t" text-anchor="end" x="1536" y="704.500">t</text><text class="t" x="1593" y="683">Q</text>
      <text class="v" transform="translate(1574 712) rotate(-90)" textLength="73" lengthAdjust="spacingAndGlyphs">dupLn</text>

      <!-- NodeSize slider -->
      <rect class="lite" x="1701.500" y="693.700" width="333.500" height="38" rx="5"/><path class="cap" d="M1806 693.700h-99.500q-5 0-5 5v28q0 5 5 5h99.500z"/><rect class="gloss" x="1703.500" y="695.300" width="329.500" height="9" rx="3"/>
      <text class="t" x="1709.500" y="721" textLength="87" lengthAdjust="spacingAndGlyphs">NodeSize</text>
      <path class="tick" d="M1825.500 702.500v11.500h34M1844.500 707v7M1920.500 702.500v4M1939.500 707v7M1958.500 707v7M1977.500 707v7M1996.500 707v7M2016 702.500v11.500h-12"/>
      <circle class="knob" cx="1864.500" cy="713.300" r="5.600"/><text class="t" x="1876" y="721" textLength="48" lengthAdjust="spacingAndGlyphs">2.071</text>

      <!-- EndOffset slider -->
      <rect class="lite" x="1703.500" y="772" width="339" height="38.500" rx="5"/><path class="cap" d="M1813.500 772h-105q-5 0-5 5v28.500q0 5 5 5h105z"/><rect class="gloss" x="1705.500" y="773.600" width="335" height="9" rx="3"/>
      <text class="t" x="1711.500" y="799" textLength="91.500" lengthAdjust="spacingAndGlyphs">EndOffset</text>
      <path class="tick" d="M1832.500 780.500v11.500h12M1851.500 785v7M1870.500 785v7M1928 780.500v4M1947.500 785v7M1966.500 785v7M1985.500 785v7M2004.500 785v7M2024 780.500v11.500h-12"/>
      <circle class="knob" cx="1936" cy="791.500" r="5.600"/><text class="t" x="1876.500" y="799" textLength="46.500" lengthAdjust="spacingAndGlyphs">5.411</text>

      <!-- MultiPipe -->
      <rect class="lite" x="2098" y="652" width="189.500" height="351" rx="5"/><rect class="gloss" x="2100" y="653.500" width="185.500" height="13" rx="3"/>
      <rect class="dark" x="2209" y="656" width="45.500" height="343" rx="6"/><rect class="shine" x="2210.500" y="657.500" width="42.500" height="9.500" rx="4"/>
      <g class="t" text-anchor="end">
        <text x="2202" y="682.700" textLength="64" lengthAdjust="spacingAndGlyphs">Curves</text><text x="2202" y="721" textLength="87" lengthAdjust="spacingAndGlyphs">NodeSize</text><text x="2202" y="759" textLength="95.500" lengthAdjust="spacingAndGlyphs">SizePoints</text><text x="2202" y="797.200" textLength="92" lengthAdjust="spacingAndGlyphs">EndOffset</text><text x="2202" y="835.300" textLength="84" lengthAdjust="spacingAndGlyphs">StrutSize</text><text x="2202" y="874" textLength="82" lengthAdjust="spacingAndGlyphs">Segment</text><text x="2202" y="912" textLength="92" lengthAdjust="spacingAndGlyphs">KinkAngle</text><text x="2202" y="950.300" textLength="71.500" lengthAdjust="spacingAndGlyphs">CubeFit</text><text x="2202" y="988.300" textLength="46" lengthAdjust="spacingAndGlyphs">Caps</text>
      </g>
      <text class="t" x="2258.500" y="835.300">P</text>
      <text class="v mp" transform="translate(2239.500 844.500) rotate(-90)" textLength="36" lengthAdjust="spacingAndGlyphs">MP</text>

      <!-- Swatch -->
      <rect class="node" x="2298" y="858" width="164.500" height="38" rx="5"/><path d="M2386 858h71.500q5 0 5 5v28q0 5-5 5H2386z" fill="#7d889a" stroke="#333" stroke-width="2"/><rect class="gloss" x="2300" y="859.500" width="160.500" height="8" rx="3"/>
      <text class="t" x="2307.500" y="885.300" textLength="67" lengthAdjust="spacingAndGlyphs">Swatch</text>

      <!-- Custom Preview -->
      <path class="lite" d="M2488 799h75.500l8 7.600-8 7.600 8 7.600-8 7.600 8 7.600-8 7.600 8 7.600-8 7.600 8 7.600-8 7.600 8 7.600-8 7.600 8 7.600-8 6.600 2 2.400H2488q-5 0-5-5V804q0-5 5-5z"/><rect class="gloss" x="2485" y="800.500" width="78" height="13" rx="3"/>
      <rect class="dark" x="2513.700" y="803" width="46" height="101" rx="6"/><rect class="shine" x="2515" y="804.500" width="43" height="9.500" rx="4"/>
      <text class="t" text-anchor="end" x="2507" y="834.700">G</text><text class="t" text-anchor="end" x="2507.500" y="886">M</text>
      <text class="v" transform="translate(2544.700 898) rotate(-90)" textLength="90" lengthAdjust="spacingAndGlyphs">Preview</text>

      <!-- Bake -->
      <path d="M2521 936h103.500l8 7.600-8 7.600 8 7.600-8 7.600 8 7.600-8 7.600 8 7.600-8 7.600 8 7.600-8 7.600 8 7.600-8 7.600 8 7.600-8 7.600 8 7.600-8 8H2521q-5 0-5-5V941q0-5 5-5z" fill="url(#ob)" stroke="#7a2810" stroke-width="2"/><rect class="gloss" x="2518" y="937.500" width="107" height="13.500" rx="3"/>
      <rect class="dark" x="2574.700" y="940" width="46" height="115" rx="6"/><rect class="shine" x="2576" y="941.500" width="43" height="9.500" rx="4"/>
      <g class="t" text-anchor="end"><text x="2568" y="966.700" textLength="43" lengthAdjust="spacingAndGlyphs">bake</text><text x="2568" y="1005" textLength="33" lengthAdjust="spacingAndGlyphs">geo</text><text x="2568" y="1043.300" textLength="25" lengthAdjust="spacingAndGlyphs">att</text></g>
      <text class="v" transform="translate(2605.700 1024.500) rotate(-90)" textLength="56" lengthAdjust="spacingAndGlyphs">Bake</text>
      <path d="M2595 905h26q4 0 4 4v20q0 4-4 4h-7l-5 6-5-6h-9q-4 0-4-4v-20q0-4 4-4z" fill="url(#bal)" stroke="#98701c" stroke-width="2"/>

      <!-- Panels -->
      <g class="panel"><rect x="2348" y="667" width="374" height="91.500" rx="5"/><rect x="292.500" y="1037" width="304.500" height="103" rx="5"/><rect x="712" y="997" width="373" height="176" rx="5"/><rect x="1255" y="1030" width="517" height="106" rx="5"/><rect x="1916" y="1039.500" width="373" height="91" rx="5"/></g>
      <path d="M2351 669.500h368M296 1039.500h298M715 999.500h367M1258 1032.500h511M1919 1042h367" stroke="#fff" stroke-opacity=".6" stroke-width="2"/>
      <g class="m">
        <text x="2393.500" y="717.500">customized Preview with color</text><text x="343.500" y="1093">Basic Geometry - Box</text>
        <text x="821" y="1068">Voronoi Diagram</text><text x="738.500" y="1089">Create pattern subdivided a plane</text><text x="784.500" y="1110">thorugh mutiple points.</text>
        <text x="1289.500" y="1077.300">Edit random genrate lines, simplfy the way they</text><text x="1386" y="1098.500">intersect with each other.</text>
        <text x="1979" y="1089">Giving thickness to lines</text>
      </g>

      <rect x="106" y="1374.500" width="19.500" height="54" fill="url(#stub)" stroke="#000" stroke-width="2"/>

      <!-- Navigation compass -->
      <path d="M2732.500 1367Q2735 1340 2762 1330.500" fill="none" stroke="#000" stroke-width="7" stroke-linecap="round"/><path d="M2715 1346.500l14-2.500 4 10-10 4z"/>
      <circle cx="2775" cy="1370.700" r="40" fill="#fff" stroke="#2a2a2a" stroke-width="2"/><circle cx="2775" cy="1370.700" r="36" fill="url(#dial)"/>
      <path d="M2781 1334l3 11.500 9-7zM2740 1352l9.500 8-12.500 2zM2810 1377.500l-12-1.500 9 12zM2755 1402l9.500-8 2 12z" fill="#fff"/>
    </svg>
  </section>

  <footer class="status">
    <svg class="info" viewBox="0 0 32 32"><circle cx="16" cy="16" r="14.500" fill="#2c80c8" stroke="#18208c" stroke-width="3"/><circle cx="16" cy="16" r="11" fill="#58b8d8" opacity=".6"/><path d="M16 7v9" stroke="#101c60" stroke-width="8" stroke-linecap="round"/><path d="M16 7v9" stroke="#9cdcf0" stroke-width="4" stroke-linecap="round"/><circle cx="16" cy="24.500" r="3" fill="#9cdcf0" stroke="#101c60" stroke-width="2"/></svg>
    <span class="msg">Save successfully completed... (7 seconds ago)</span>
    <span class="ver">1.0.0007</span>
  </footer>
</main>
</body>
</html>
```
FILE: styles.css
```css
* { box-sizing: border-box; }
body {
  margin: 0;
  width: 2948px;
  height: 1628px;
  padding: 76px 112px 0;
  background: #fff;
  overflow: hidden;
  font-family: Inter, "Liberation Sans", sans-serif;
}
.defs { display: block; height: 0; }

.window {
  width: 2724px;
  height: 1404px;
  display: flex;
  flex-direction: column;
  border-radius: 20px;
  overflow: hidden;
  background: #efedf2;
  box-shadow: 0 0 0 1px rgba(0, 0, 0, .3), 0 36px 50px rgba(0, 0, 0, .3), 0 30px 100px rgba(0, 0, 0, .26);
}

.titlebar {
  height: 57px;
  display: grid;
  grid-template-columns: 1fr auto 1fr;
  align-items: center;
  background: #f3eff7;
  border-bottom: 1px solid #c4c2c6;
  box-shadow: inset 0 1px #fff;
}
.titlebar h1 {
  margin: 0;
  padding-bottom: 3px;
  font-size: 26.300px;
  font-weight: 700;
  color: #464448;
}
.lights { display: flex; gap: 16px; padding-left: 16px; }
.lights i { width: 24px; height: 24px; border-radius: 50%; }
.red { background: #ec6a5e; border: 1px solid #d2554a; }
.yellow { background: #f4bf4f; border: 1px solid #d8a13c; }
.green { background: #61c554; border: 1px solid #4aa73c; }

.tabs {
  height: 44px;
  display: grid;
  grid-template-columns: 116px 88px 72px 89px 87px 105px 82px 113px 127px 101px 169px 138px 100px;
  background: #ebebeb;
  box-shadow: inset 0 -2px #a0a0a0;
  font: 23.200px/44px "Liberation Sans", Arial, sans-serif;
  color: #757575;
}
.tabs a { padding-top: 1px; white-space: nowrap; }
.tabs .active {
  width: 105px;
  height: 44px;
  padding: 0 0 0 9.500px;
  line-height: 35px;
  letter-spacing: -.1px;
  color: #222;
  background: linear-gradient(#fff 55%, #dedede);
  border: 2px solid #969696;
  border-bottom: 0;
  border-radius: 14px 14px 0 0;
}

.ribbon {
  height: 177px;
  display: flex;
  gap: 6px;
  padding: 5px 5px 0;
  background: linear-gradient(#dadada, #ebebeb 65%);
  border-bottom: 2px solid #d4d3d8;
}
.group {
  height: 146px;
  border: 2px solid #8e8e8e;
  border-radius: 9px;
  overflow: hidden;
  background: linear-gradient(#dadada, #ececec);
  box-shadow: inset 0 0 0 1px #f4f4f4;
}
.tools { display: flex; height: 115px; padding: 1.500px 3px 0 2.500px; }
.bank { display: grid; grid-auto-flow: column; grid-template-rows: 56px 56px; grid-auto-columns: 56px; place-items: center; }
.icon { width: 48px; height: 48px; display: block; }
.line .icon { fill: none; stroke: #222; stroke-width: 2; }
.glyph { font-family: "Liberation Serif", serif; font-weight: 700; fill: #fff; text-anchor: middle; }
.dim { fill: #bbb; }
.axis { font: italic bold 17px "Liberation Serif", serif; fill: #111; stroke: none; }
.sep { width: 20px; height: 108px; margin-top: 3px; background: linear-gradient(transparent, #b4b4b4 50%, transparent) 8px 0 / 2px 100% no-repeat, linear-gradient(transparent, #fff 50%, transparent) 10px 0 / 2px 100% no-repeat; }
.group footer {
  height: 28px;
  display: flex;
  align-items: flex-start;
  background: linear-gradient(#3a3a3a, #222);
  color: #dcdcdc;
  font: 20.200px/24px "Liberation Sans", Arial, sans-serif;
}
.group footer span { flex: 1; text-align: center; }
.more { width: 14px; height: 16px; margin: 6px 3px 0; }

.group + .group { margin-left: .5px; }

.toolbar {
  height: 60px;
  display: flex;
  justify-content: space-between;
  align-items: center;
  padding: 0 20px 0 2px;
}
.left, .right { display: flex; align-items: center; }
.btn {
  height: 40px;
  padding: 0;
  border: 0;
  border-radius: 11px;
  background: #fff;
  box-shadow: 0 1px 2px rgba(0, 0, 0, .3);
  display: grid;
  place-items: center;
}
.w52 { width: 52px; }
.w64 { width: 64px; }
.save { margin-left: 4px; }
.fit { margin-left: 4px; }
.eye { margin-left: 22px; }
.paint { margin-left: 20px; }
.eye .tb { width: 31px; height: 28px; }
.tb { width: 30px; height: 30px; display: block; }
.rule { width: 2px; height: 32px; margin: 0 7px 0 8px; background: #d8d6dc; }
.right .btn + .btn { margin-left: 1.500px; }
.right .on { background: linear-gradient(#4a90f8, #3478f6); }
.right .rule { margin: 0 13px 0 14px; }
.right .rule.tight { margin: 0 3px; }
.zoom {
  width: 145px;
  height: 40px;
  padding: 4px 4px 4px 21px;
  display: flex;
  align-items: center;
  justify-content: space-between;
  border-radius: 11px;
  background: #fff;
  box-shadow: 0 1px 2px rgba(0, 0, 0, .3);
  font-size: 24.500px;
  letter-spacing: -.6px;
  color: #222;
}
.zoom i {
  width: 32px;
  height: 32px;
  display: grid;
  place-items: center;
  border-radius: 8px;
  background: linear-gradient(#4a90f8, #3478f6);
}
.zoom svg { width: 20px; height: 20px; }

.canvas {
  height: 1018px;
  margin: 0;
  padding: 0 2px;
  border-bottom: 2px solid #d8d6de;
}
.graph { display: block; width: 2720px; height: 1016px; background: #dcd9d3; }
.wires path { fill: none; stroke: #000; stroke-opacity: .6; }
.halo { fill: none; stroke: #fff; stroke-opacity: .7; stroke-width: 4; }
.node { fill: url(#nb); stroke: #333; stroke-width: 2; }
.lite { fill: url(#wb); stroke: #444; stroke-width: 2; }
.cap { fill: url(#nb); stroke: #333; stroke-width: 2; }
.gloss { fill: url(#gl); }
.dark { fill: url(#db); stroke: #000; stroke-width: 2.500; }
.shine { fill: url(#gd); }
.tick { fill: none; stroke: #000; stroke-opacity: .16; stroke-width: 2.400; }
.knob { fill: #fff; stroke: #000; stroke-width: 4; }
.badge { fill: #dcdcdc; stroke: #555; stroke-width: 2; }
.t { font-family: Inter, sans-serif; font-size: 20px; fill: #000; }
.v { font-family: Inter, sans-serif; font-size: 24px; font-weight: 800; fill: #fff; }
.mp { font-size: 23px; }
.m { font-family: "Liberation Mono", "Courier New", monospace; font-size: 15.250px; fill: #30591c; }
.panel { fill: #fdf880; stroke: #2c2c2c; stroke-width: 2; }

.status {
  height: 48px;
  display: flex;
  align-items: center;
  padding: 0 140px 4px 3px;
  font-size: 24px;
  color: #222;
}
.info { width: 33px; height: 33px; margin-top: 2px; }
.msg { margin-left: 4px; letter-spacing: -.13px; }
.ver { margin-left: auto; }
```
